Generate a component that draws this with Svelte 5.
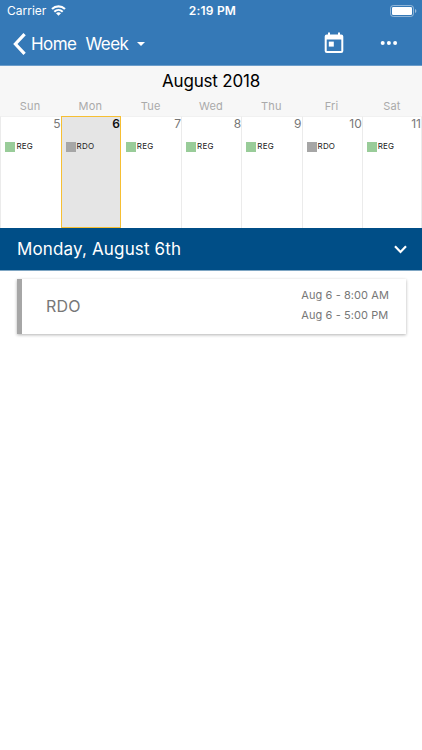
<script lang="ts">
let expanded = $state(true);
let selected = $state(1);

const days = [
	{ name: 'Sun', date: 5, shift: 'REG' },
	{ name: 'Mon', date: 6, shift: 'RDO' },
	{ name: 'Tue', date: 7, shift: 'REG' },
	{ name: 'Wed', date: 8, shift: 'REG' },
	{ name: 'Thu', date: 9, shift: 'REG' },
	{ name: 'Fri', date: 10, shift: 'RDO' },
	{ name: 'Sat', date: 11, shift: 'REG' },
];

const fullNames = ['Sunday', 'Monday', 'Tuesday', 'Wednesday', 'Thursday', 'Friday', 'Saturday'];

const current = $derived(days[selected]);
</script>

<div class="screen">
	<header>
		<div class="status">
			<div class="carrier">
				<span>Carrier</span>
				<svg width="15" height="11" viewBox="0 0 15 11" fill="none" stroke="#fff" stroke-width="2.1">
					<path d="M1 4.1C4.7 .4 10.3 .4 14 4.1" />
					<path d="M3.3 6.7C5.8 4.4 9.2 4.4 11.7 6.7" />
					<path d="M5 8.2Q7.5 6.2 10 8.2L7.5 10.7Z" fill="#fff" stroke="none" />
				</svg>
			</div>
			<strong>2:19 PM</strong>
			<svg class="battery" width="27" height="12" viewBox="0 0 27 12">
				<rect x=".5" y=".5" width="23" height="11" rx="2.8" fill="none" stroke="#fff" stroke-opacity=".45" />
				<rect x="2" y="2" width="20" height="8" rx="1.2" fill="#fff" />
				<path d="M25 4Q26.4 4.5 26.4 6T25 8Z" fill="#fff" fill-opacity=".5" />
			</svg>
		</div>

		<nav>
			<button class="back" aria-label="Home">
				<svg width="13" height="22" viewBox="0 0 13 22" fill="none" stroke="#fff" stroke-width="3.2">
					<path d="M11.6 1.2L2.4 11L11.6 20.8" />
				</svg>
				<span>Home</span>
			</button>
			<button class="view">
				<span>Week</span>
				<svg width="8" height="4" viewBox="0 0 8 4"><path d="M0 0H8L4 4Z" fill="#fff" /></svg>
			</button>
			<button class="today" aria-label="Today">
				<svg width="20" height="22" viewBox="0 0 20 22" fill="#fff">
					<path fill-rule="evenodd" d="M4 .5H6V2.5H14V.5H16V2.5H17.2Q19.3 2.5 19.3 4.6V18.9Q19.3 21 17.2 21H2.8Q.7 21 .7 18.9V4.6Q.7 2.5 2.8 2.5H4ZM2.7 7.4V19H17.3V7.4Z" />
					<rect x="4.8" y="9.6" width="5" height="5" />
				</svg>
			</button>
			<button class="more" aria-label="More">
				<svg width="18" height="4" viewBox="0 0 18 4" fill="#fff">
					<circle cx="2.7" cy="2" r="2" /><circle cx="8.9" cy="2" r="2" /><circle cx="15.1" cy="2" r="2" />
				</svg>
			</button>
		</nav>
	</header>

	<section class="calendar">
		<h1>August 2018</h1>
		<div class="weekdays">
			{#each days as day}
				<span>{day.name}</span>
			{/each}
		</div>
		<div class="week">
			{#each days as day, i}
				<button class="day" class:selected={selected === i} onclick={() => selected = i}>
					<span class="date">{day.date}</span>
					<span class="shift">
						<i class:off={day.shift === 'RDO'}></i><span>{day.shift}</span>
					</span>
				</button>
			{/each}
		</div>
	</section>

	<button class="day-bar" onclick={() => expanded = !expanded}>
		<span>{fullNames[selected]}, August {current.date}th</span>
		<svg class:closed={!expanded} width="13" height="9" viewBox="0 0 13 9" fill="none" stroke="#fff" stroke-width="2.2">
			<path d="M1 1.2L6.5 6.9L12 1.2" />
		</svg>
	</button>

	{#if expanded}
		<article class="card" class:off={current.shift === 'RDO'}>
			<span class="title">{current.shift}</span>
			<div class="times">
				<span>Aug {current.date} - 8:00 AM</span>
				<span>Aug {current.date} - 5:00 PM</span>
			</div>
		</article>
	{/if}
</div>

<style>
	:global(body) {
		background: #fff;
	}

	.screen {
		min-height: 750px;
		font-family: Inter, "Liberation Sans", sans-serif;
	}

	button {
		margin: 0;
		padding: 0;
		border: 0;
		background: none;
		color: inherit;
		font: inherit;
		letter-spacing: inherit;
		text-align: left;
		cursor: pointer;
	}

	svg {
		display: block;
		flex: none;
	}

	header {
		box-sizing: border-box;
		height: 66px;
		background: #3579b7;
		border-bottom: 1px solid #6c9dca;
		color: #fff;
	}

	.status {
		display: grid;
		grid-template-columns: 1fr auto 1fr;
		align-items: center;
		height: 21px;
		padding: 0 5px 1px 7px;
		font-size: 12px;

		strong {
			margin-left: 1px;
			font-weight: 600;
			letter-spacing: 0.2px;
		}
	}

	.carrier {
		display: flex;
		align-items: center;
		gap: 5px;
	}

	.battery {
		justify-self: end;
	}

	nav {
		display: flex;
		align-items: center;
		height: 43px;
		padding: 0 24px 0 13px;
		font-size: 17px;
		letter-spacing: -0.55px;
	}

	.back {
		display: flex;
		align-items: center;
		gap: 5px;
	}

	.view {
		display: flex;
		align-items: center;
		gap: 9px;
		margin-left: 9px;
	}

	.today {
		margin: -2px 36px 0 auto;
	}

	.more {
		margin-top: -2px;
	}

	.calendar {
		background: #f7f7f7;
	}

	h1 {
		margin: 0;
		height: 31px;
		font-size: 17px;
		font-weight: 400;
		line-height: 31px;
		text-align: center;
		letter-spacing: -0.2px;
	}

	.weekdays {
		display: grid;
		grid-template-columns: repeat(7, 1fr);
		height: 19px;
		color: #aaa;
		font-size: 11px;
		line-height: 18px;
		text-align: center;
		letter-spacing: 0.2px;
	}

	.week {
		display: grid;
		grid-template-columns: repeat(7, 1fr);
		height: 112px;
		padding-left: 0.4px;
		background: #fff;
	}

	.day {
		box-sizing: border-box;
		display: flex;
		flex-direction: column;
		border-top: 1px solid #f1f1f1;
		border-left: 1px solid #ebebeb;

		&:last-child {
			border-right: 1px solid #ebebeb;
		}

		&.selected {
			border: 1px solid #f6bf33;
			background: #e5e5e5;

			.date {
				color: #111;
				font-weight: 600;
			}
		}
	}

	.selected + .day {
		border-left-color: transparent;
	}

	.date {
		align-self: flex-end;
		color: #777;
		font-size: 12px;
		line-height: 14px;
	}

	.shift {
		display: flex;
		align-items: center;
		gap: 1px;
		margin: 11px 0 0 4px;
		color: #222;
		font-size: 8px;
		line-height: 10px;
		letter-spacing: 0.2px;

		i {
			width: 10px;
			height: 10px;
			background: #99cc99;

			&.off {
				background: #a6a6a6;
			}
		}

		span {
			margin-top: -2px;
		}
	}

	.day-bar {
		box-sizing: border-box;
		display: flex;
		align-items: center;
		justify-content: space-between;
		width: 100%;
		height: 43px;
		padding: 0 15px 0 17px;
		background: #004e87;
		border-bottom: 1px solid #7fa6c3;
		color: #fff;
		font-size: 17px;
		letter-spacing: 0.15px;
	}

	.closed {
		rotate: 180deg;
	}

	.card {
		box-sizing: border-box;
		display: flex;
		align-items: center;
		justify-content: space-between;
		height: 55px;
		margin: 8px 16px 0 17px;
		padding: 0 17px 0 24px;
		border-left: 5px solid #99cc99;
		background: #fff;
		box-shadow: 0 1px 3px rgba(0, 0, 0, 0.3);
		color: #777;

		&.off {
			border-left-color: #a6a6a6;
		}
	}

	.title {
		margin-top: -2px;
		font-size: 16px;
		letter-spacing: 0.15px;
	}

	.times {
		display: flex;
		flex-direction: column;
		margin-top: -4px;
		font-size: 11px;
		line-height: 20px;
		letter-spacing: 0.08px;
	}
</style>
